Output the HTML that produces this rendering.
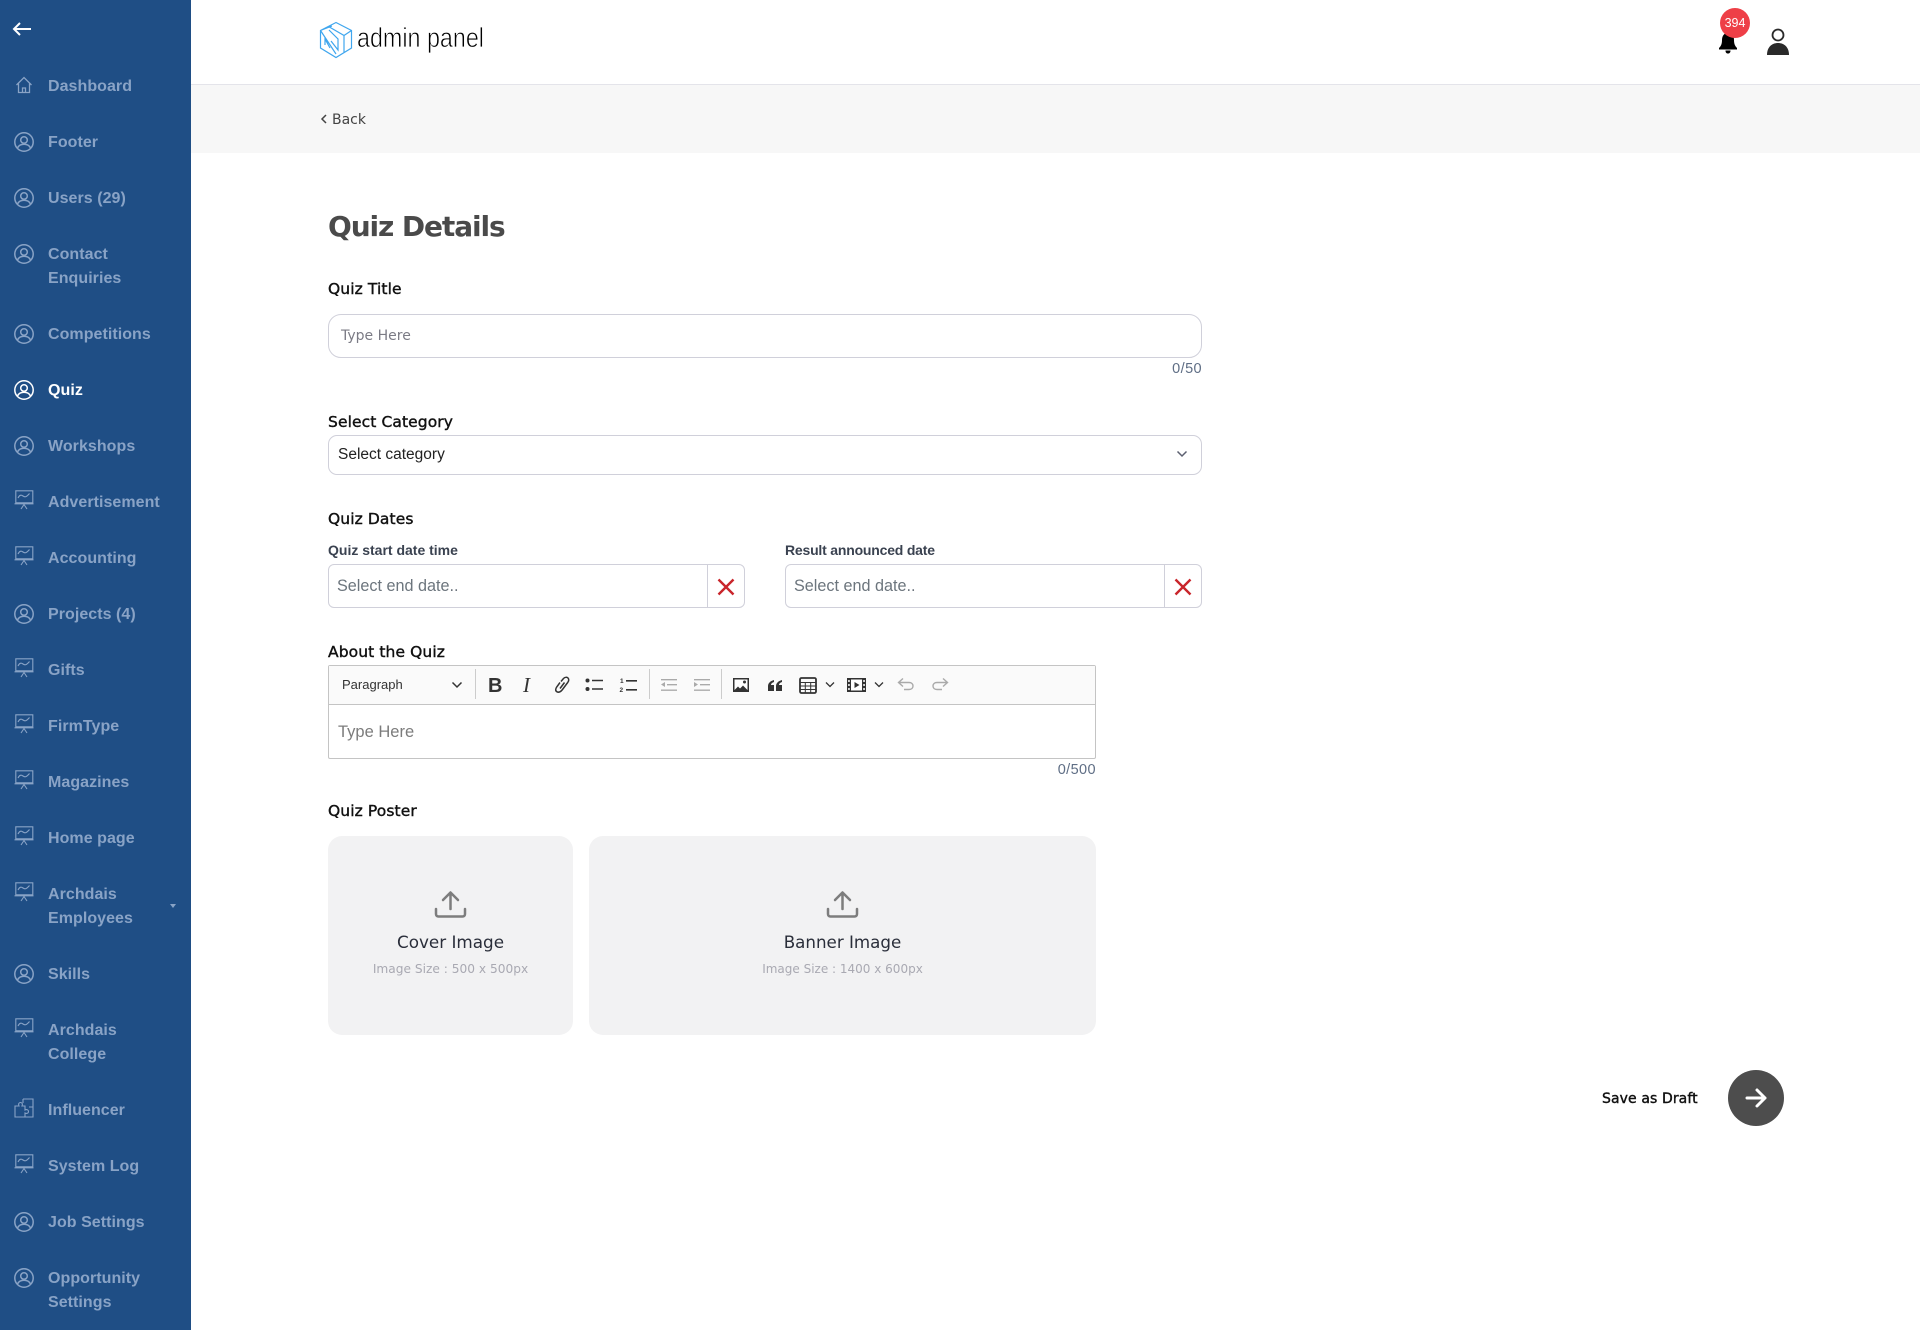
<!DOCTYPE html>
<html lang="en"><head><meta charset="utf-8"><title>Quiz Details</title>
<style>
*{box-sizing:border-box}
html,body{margin:0;padding:0;width:1920px;height:1330px;overflow:hidden;background:#fff;font-family:"Liberation Sans",sans-serif}
.a{position:absolute;white-space:nowrap;line-height:1}
#side{position:absolute;left:0;top:0;width:191px;height:1330px;background:#1f4e85}
.n{position:absolute;left:48px;font-weight:700;font-size:16px;line-height:24px;color:#89a3c6;letter-spacing:.05px;white-space:nowrap;margin-top:1px}
.i{position:absolute;left:14px;width:20px;height:20px;fill:none;stroke:#89a3c6;stroke-width:1.5}
.h{font-family:"DejaVu Sans",sans-serif}
.lab{font-family:"DejaVu Sans",sans-serif;font-size:15.5px;color:#111;letter-spacing:.1px;font-weight:400;-webkit-text-stroke:.4px #111}
.box{position:absolute;background:#fff;border:1px solid #d0d0da}
.cnt{font-size:14.5px;color:#5f6e85;letter-spacing:.4px}
.card{position:absolute;top:836px;height:199px;background:#f2f2f3;border-radius:14px}
</style></head><body>
<svg width="0" height="0" style="position:absolute"><defs>
<symbol id="u" viewBox="0 0 20 20"><circle cx="10" cy="10" r="9.2"/><circle cx="10" cy="8" r="3.3"/><path d="M3.6 15.8c1.2-2.6 3.6-3.6 6.4-3.6s5.200 1 6.400 3.600"/></symbol>
<symbol id="p" viewBox="0 0 20 20"><path stroke-width="1.1" d="M1.800 0.800H18.800V12.800H1.800ZM0.500 13.800H19.500M4 8c1.500-3 3-3.500 5-2s3.500 1 6.500-2.500M10 14.500L7 19M10 14.500L13 19"/></symbol>
<symbol id="z" viewBox="0 0 20 20"><path stroke-width="1.100" d="M9 1h10v18H1V8h4c-1-2 0-3.500 1.500-3.500S9 6 8 8h3v4c2-1 3.500 0 3.500 1.500S13 16 11 15v4M9 1v4M19 9h-4"/></symbol>
</defs></svg>

<div id="side">
<svg class="a" style="left:12px;top:21px" width="20" height="16" viewBox="0 0 20 16" fill="none" stroke="#fff" stroke-width="2"><path d="M19 8H2M8 2L2 8l6 6"/></svg>
<svg class="i" style="top:75px" viewBox="0 0 20 20"><path stroke-width="1.300" d="M2.500 10L10 2.500 17.500 10M4.500 8.500V17.500H15.500V8.500M8.500 17.500v-4.500h3V17.500"/></svg><div class="n" style="top:74px">Dashboard</div>
<svg class="i" style="top:132px"><use href="#u"/></svg><div class="n" style="top:130px">Footer</div>
<svg class="i" style="top:188px"><use href="#u"/></svg><div class="n" style="top:186px">Users (29)</div>
<svg class="i" style="top:244px"><use href="#u"/></svg><div class="n" style="top:242px">Contact<br>Enquiries</div>
<svg class="i" style="top:324px"><use href="#u"/></svg><div class="n" style="top:322px">Competitions</div>
<svg class="i" style="top:380px;stroke:#fff"><use href="#u"/></svg><div class="n" style="top:378px;color:#fff">Quiz</div>
<svg class="i" style="top:436px"><use href="#u"/></svg><div class="n" style="top:434px">Workshops</div>
<svg class="i" style="top:490px"><use href="#p"/></svg><div class="n" style="top:490px">Advertisement</div>
<svg class="i" style="top:546px"><use href="#p"/></svg><div class="n" style="top:546px">Accounting</div>
<svg class="i" style="top:604px"><use href="#u"/></svg><div class="n" style="top:602px">Projects (4)</div>
<svg class="i" style="top:658px"><use href="#p"/></svg><div class="n" style="top:658px">Gifts</div>
<svg class="i" style="top:714px"><use href="#p"/></svg><div class="n" style="top:714px">FirmType</div>
<svg class="i" style="top:770px"><use href="#p"/></svg><div class="n" style="top:770px">Magazines</div>
<svg class="i" style="top:826px"><use href="#p"/></svg><div class="n" style="top:826px">Home page</div>
<svg class="i" style="top:882px"><use href="#p"/></svg><div class="n" style="top:882px">Archdais<br>Employees</div>
<div class="a" style="left:170px;top:904px;border:3px solid transparent;border-top:4px solid #89a3c6;width:0;height:0"></div>
<svg class="i" style="top:964px"><use href="#u"/></svg><div class="n" style="top:962px">Skills</div>
<svg class="i" style="top:1018px"><use href="#p"/></svg><div class="n" style="top:1018px">Archdais<br>College</div>
<svg class="i" style="top:1098px"><use href="#z"/></svg><div class="n" style="top:1098px">Influencer</div>
<svg class="i" style="top:1154px"><use href="#p"/></svg><div class="n" style="top:1154px">System Log</div>
<svg class="i" style="top:1212px"><use href="#u"/></svg><div class="n" style="top:1210px">Job Settings</div>
<svg class="i" style="top:1268px"><use href="#u"/></svg><div class="n" style="top:1266px">Opportunity<br>Settings</div>
</div>

<!-- header -->
<div class="a" style="left:191px;top:84px;width:1729px;height:1px;background:#e4e4ea"></div>
<div class="a" style="left:191px;top:85px;width:1729px;height:68px;background:#f7f7f7"></div>
<svg class="a" style="left:319px;top:21px" width="34" height="38" viewBox="0 0 34 38" fill="none" stroke="#3fa6ee" stroke-width="1.200"><path d="M17 1.500L32.500 9.500V27L17 36.500 1.500 27V9.500ZM1.500 9.500L13 5M9.500 5.500L25 14.500V31.500M25 14.500L32.500 9.500M1.500 9.500L17 33M10 9L19 18V29L12 20M6 24V18L11 27"/></svg>
<svg class="a" style="left:355px;top:14px" width="140" height="50"><text x="2" y="33" font-family="Liberation Sans" font-size="28" fill="#000" stroke="#fff" stroke-width=".7" textLength="127" lengthAdjust="spacingAndGlyphs">admin panel</text></svg>
<svg class="a" style="left:320px;top:113px" width="8" height="12" fill="none" stroke="#444" stroke-width="1.500"><path d="M6 2L2 6l4 4"/></svg>
<div class="a h" style="left:332px;top:113px;font-size:14px;color:#444">Back</div>

<svg class="a" style="left:1718px;top:30px" width="20" height="24" viewBox="0 0 20 24"><path fill="#000" d="M10 3c4 0 6 3 6 7 0 4 1 6 3 8v1.500H1V18c2-2 3-4 3-8 0-4 2-7 6-7zM7.500 20.500h5c0 2-1 3-2.500 3s-2.500-1-2.500-3z"/></svg>
<div class="a" style="left:1720px;top:8px;width:30px;height:30px;border-radius:50%;background:#ee3f47;color:#fff;font-size:12.500px;line-height:30px;text-align:center">394</div>
<svg class="a" style="left:1766px;top:28px" width="24" height="28" viewBox="0 0 24 28"><circle cx="12" cy="7" r="5.500" fill="#fff" stroke="#2a2a2a" stroke-width="1.800"/><path fill="#2a2a2a" d="M1 27c0-8 5-12 11-12s11 4 11 12z"/></svg>

<!-- form -->
<div class="a h" style="left:328px;top:213px;font-size:28px;font-weight:700;color:#4a4a4a;letter-spacing:-1.100px">Quiz Details</div>
<div class="a lab" style="left:328px;top:282px">Quiz Title</div>
<div class="box" style="left:328px;top:314px;width:874px;height:44px;border-radius:13px"></div>
<div class="a h" style="left:341px;top:329px;font-size:14px;color:#7b7b85">Type Here</div>
<div class="a cnt" style="right:718px;top:362px">0/50</div>

<div class="a lab" style="left:328px;top:415px">Select Category</div>
<div class="box" style="left:328px;top:435px;width:874px;height:40px;border-radius:9px"></div>
<div class="a" style="left:338px;top:447px;font-size:15.500px;color:#222">Select category</div>
<svg class="a" style="left:1176px;top:449px" width="12" height="10" fill="none" stroke="#5c6070" stroke-width="1.500"><path d="M1.500 2.500L6 7l4.500-4.500"/></svg>

<div class="a lab" style="left:328px;top:512px">Quiz Dates</div>
<div class="a" style="left:328px;top:543px;font-size:14px;font-weight:700;color:#3a4250">Quiz start date time</div>
<div class="a" style="left:785px;top:543px;font-size:14px;font-weight:700;color:#3a4250;letter-spacing:-.2px">Result announced date</div>
<div class="box" style="left:328px;top:564px;width:417px;height:44px;border-radius:6px"></div>
<div class="a" style="left:707px;top:565px;width:1px;height:42px;background:#d0d0da"></div>
<div class="a" style="left:337px;top:578px;font-size:16.200px;color:#6c757d">Select end date..</div>
<svg class="a" style="left:717px;top:578px" width="18" height="18" fill="none" stroke="#c9252b" stroke-width="2.400"><path d="M1.500 1.500L16.500 16.500M16.500 1.500L1.500 16.500"/></svg>
<div class="box" style="left:785px;top:564px;width:417px;height:44px;border-radius:6px"></div>
<div class="a" style="left:1164px;top:565px;width:1px;height:42px;background:#d0d0da"></div>
<div class="a" style="left:794px;top:578px;font-size:16.200px;color:#6c757d">Select end date..</div>
<svg class="a" style="left:1174px;top:578px" width="18" height="18" fill="none" stroke="#c9252b" stroke-width="2.400"><path d="M1.500 1.500L16.500 16.500M16.500 1.500L1.500 16.500"/></svg>

<div class="a lab" style="left:328px;top:645px">About the Quiz</div>
<div class="a" style="left:328px;top:665px;width:768px;height:94px;border:1px solid #c4c4c4;border-radius:2px;background:#fff"></div>
<div class="a" style="left:329px;top:666px;width:766px;height:39px;background:#fafafa;border-bottom:1px solid #c4c4c4"></div>
<div class="a" style="left:342px;top:678px;font-size:13px;color:#333">Paragraph</div>
<svg class="a" style="left:451px;top:681px" width="12" height="9" fill="none" stroke="#333" stroke-width="1.500"><path d="M1.500 1.500L6 6l4.500-4.500"/></svg>
<div class="a" style="left:475px;top:669px;width:1px;height:30px;background:#ccc"></div>
<div class="a" style="left:649px;top:669px;width:1px;height:30px;background:#ccc"></div>
<div class="a" style="left:721px;top:669px;width:1px;height:30px;background:#ccc"></div>
<div class="a" style="left:488px;top:676px;font-size:20px;font-weight:700;color:#333">B</div>
<div class="a" style="left:523px;top:675px;font-size:21px;font-style:italic;font-family:'Liberation Serif',serif;color:#333">I</div>
<svg class="a" style="left:553px;top:676px" width="18" height="18" fill="none" stroke="#333" stroke-width="1.500"><path d="M8 5.500l2.500-3c1.500-1.500 3.500-1.500 4.500-.5s1 3-.3 4.500l-5.200 7c-1.800 2.300-3.600 3.300-5.500 2.300s-1.500-3-.3-4.800L7 6.500"/><path d="M11.500 6.500l-4.500 6"/></svg>
<svg class="a" style="left:585px;top:677px" width="18" height="16" fill="#333"><circle cx="2.500" cy="3.500" r="2"/><circle cx="2.500" cy="12" r="2"/><path d="M7 2.700h11v1.600H7zM7 11.200h11v1.600H7z"/></svg>
<svg class="a" style="left:619px;top:676px" width="18" height="18" fill="#333"><path d="M7 4h11v1.600H7zM7 13h11v1.600H7z"/><text x="1" y="7" font-size="6.500" font-weight="700" font-family="Liberation Sans">1</text><text x="0.500" y="16" font-size="6.500" font-weight="700" font-family="Liberation Sans">2</text></svg>
<svg class="a" style="left:660px;top:677px" width="18" height="16" fill="#aaa"><path d="M1 2h16v1.400H1zM7 7h10v1.400H7zM1 12.500h16v1.400H1zM5 5v5L1 7.500z"/></svg>
<svg class="a" style="left:693px;top:677px" width="18" height="16" fill="#aaa"><path d="M1 2h16v1.400H1zM7 7h10v1.400H7zM1 12.500h16v1.400H1zM1 5v5L5 7.500z"/></svg>
<svg class="a" style="left:732px;top:677px" width="18" height="16"><path fill="#333" d="M1 1h16v14H1z"/><path fill="#fff" d="M2.500 2.500h13V13L11 8.500 8 11.500 6 9.500 2.500 13z"/><circle cx="12.500" cy="5" r="1.500" fill="#333"/></svg>
<svg class="a" style="left:767px;top:678px" width="16" height="14" fill="#333"><path d="M7 2C3 3 1 5.500 1 8v5h6V7H4c0-1.500 1.500-2.500 3-3zM15 2c-4 1-6 3.500-6 6v5h6V7h-3c0-1.500 1.500-2.500 3-3z"/></svg>
<svg class="a" style="left:799px;top:677px" width="18" height="17" fill="none" stroke="#333"><rect x="1" y="1" width="16" height="15" rx="1.500" stroke-width="1.800"/><path stroke-width="1" d="M1 5.500h16M1 9h16M1 12.500h16M6.300 5v11M11.700 5v11"/></svg>
<svg class="a" style="left:825px;top:681px" width="10" height="8" fill="none" stroke="#333" stroke-width="1.300"><path d="M1 1.500L5 5.500l4-4"/></svg>
<svg class="a" style="left:847px;top:677px" width="19" height="16"><path fill="#333" d="M0 1h19v14H0z"/><path fill="#fff" d="M4 2.500h11v11H4zM1.200 3h1.500v2H1.200zM1.200 7h1.500v2H1.200zM1.200 11h1.500v2H1.200zM16.300 3h1.500v2h-1.500zM16.300 7h1.500v2h-1.500zM16.300 11h1.500v2h-1.500z"/><path fill="#333" d="M7.500 5v6l5-3z"/></svg>
<svg class="a" style="left:874px;top:681px" width="10" height="8" fill="none" stroke="#333" stroke-width="1.300"><path d="M1 1.500L5 5.500l4-4"/></svg>
<svg class="a" style="left:897px;top:677px" width="18" height="16" fill="none" stroke="#aaa" stroke-width="1.400"><path d="M6 1.500L1.500 5.500 6 9.500M1.500 5.500H12c2.500 0 4 1.500 4 3.500s-1.500 3.500-4 3.500H7"/></svg>
<svg class="a" style="left:931px;top:677px" width="18" height="16" fill="none" stroke="#aaa" stroke-width="1.400"><path d="M12 1.500L16.500 5.500 12 9.500M16.500 5.500H6c-2.500 0-4 1.500-4 3.500s1.500 3.500 4 3.500h5"/></svg>
<div class="a" style="left:338px;top:724px;font-size:16.500px;color:#7c7c7c">Type Here</div>
<div class="a cnt" style="right:824px;top:763px">0/500</div>

<div class="a lab" style="left:328px;top:804px">Quiz Poster</div>
<div class="card" style="left:328px;width:245px"></div>
<div class="card" style="left:589px;width:507px"></div>
<svg class="a" style="left:434px;top:890px" width="33" height="29" fill="none" stroke="#7d7d7d" stroke-width="2.500" stroke-linecap="round" stroke-linejoin="round"><path d="M16.500 19V3M9 10l7.500-7.500L24 10M2 19v5c0 1.500 1 2.500 2.500 2.500h24c1.500 0 2.500-1 2.500-2.500v-5"/></svg>
<svg class="a" style="left:826px;top:890px" width="33" height="29" fill="none" stroke="#7d7d7d" stroke-width="2.500" stroke-linecap="round" stroke-linejoin="round"><path d="M16.500 19V3M9 10l7.500-7.500L24 10M2 19v5c0 1.500 1 2.500 2.500 2.500h24c1.500 0 2.500-1 2.500-2.500v-5"/></svg>
<div class="a h" style="left:328px;width:245px;text-align:center;top:934px;font-size:16.800px;color:#2a2e3a">Cover Image</div>
<div class="a h" style="left:589px;width:507px;text-align:center;top:934px;font-size:16.700px;color:#2a2e3a">Banner Image</div>
<div class="a h" style="left:328px;width:245px;text-align:center;top:963px;font-size:12.200px;color:#a9a9b2">Image Size : 500 x 500px</div>
<div class="a h" style="left:589px;width:507px;text-align:center;top:963px;font-size:12px;color:#a9a9b2">Image Size : 1400 x 600px</div>

<div class="a lab" style="left:1602px;top:1092px;font-size:14px">Save as Draft</div>
<div class="a" style="left:1728px;top:1070px;width:56px;height:56px;border-radius:50%;background:#4d4d4d"></div>
<svg class="a" style="left:1744px;top:1086px" width="24" height="24" fill="none" stroke="#fff" stroke-width="3" stroke-linecap="round" stroke-linejoin="round"><path d="M3 12h18M13 4l8 8-8 8"/></svg>
</body></html>
